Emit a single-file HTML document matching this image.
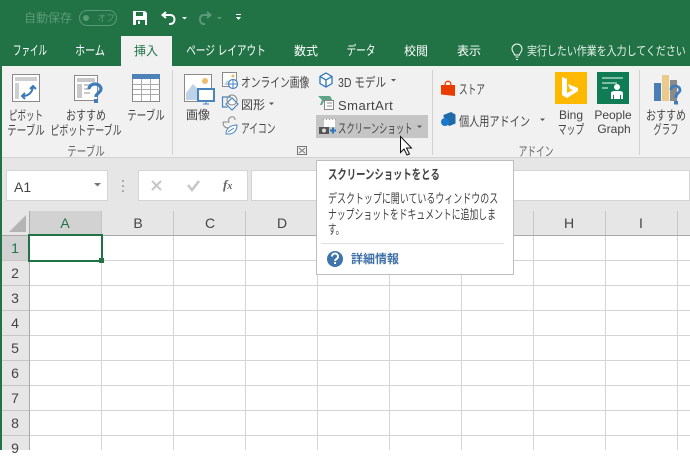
<!DOCTYPE html>
<html lang="ja"><head><meta charset="utf-8"><style>
*{box-sizing:border-box}
html,body{margin:0;padding:0}
body{width:690px;height:450px;overflow:hidden;position:relative;background:#fff;font-family:"Liberation Sans","Noto Sans CJK JP",sans-serif;color:#444}
.a{position:absolute;white-space:nowrap}
.c{text-align:center;transform:translateX(-50%) scaleX(var(--k,1))}
.x{transform-origin:0 50%;transform:scaleX(var(--k,1))}
.t{font-size:12px;line-height:14px;color:#fff;top:44px}
.r{font-size:12px;line-height:15px;color:#444}
.q{font-size:13px;line-height:14px;color:#444}
.b{font-size:13px}
.s{position:absolute;left:0;top:0}
.h{position:absolute;font-size:14px;line-height:16px;color:#444;top:215px;transform:translateX(-50%)}
.n{position:absolute;font-size:14px;line-height:16px;color:#444;left:15px;transform:translateX(-50%)}
</style></head><body>
<div class="a" style="left:0;top:0;width:690px;height:66px;background:#217346"></div>
<div class="a" style="left:0;top:66px;width:690px;height:92px;background:#f1f1f1;border-bottom:1px solid #d2d2d2"></div>
<div class="a" style="left:0;top:66px;width:2px;height:384px;background:#217346"></div>
<div class="a" style="left:0;top:158px;width:690px;height:53px;background:#e6e6e6;margin-left:2px"></div>

<div class="a" style="left:24px;top:11px;font-size:12px;line-height:15px;color:#5b9a77">自動保存</div>
<div class="a" style="left:79px;top:10px;width:38px;height:16px;border:1px solid #5b9a77;border-radius:8px"></div>
<div class="a" style="left:83px;top:15px;width:6px;height:6px;border-radius:3px;background:#5b9a77"></div>
<div class="a" style="left:97px;top:13px;font-size:9px;line-height:11px;color:#5b9a77">オフ</div>
<svg class="s" width="260" height="34"><path d="M133 11h12l2 2v12h-14z" fill="#fff"/><path d="M136 12h7v4h-7zM136 20h9v5h-9z" fill="#217346"/><path d="M138 21h2v3h-2z" fill="#fff"/>
<path d="M166 12l-3.500 3 3.500 3M163 15h7c3 0 4.500 2 4.500 4.500s-1.500 4.500-4.500 4.500h-1" fill="none" stroke="#fff" stroke-width="2"/><path d="M182 17h5l-2.500 2.500z" fill="#fff"/>
<path d="M207 12l3.500 3-3.500 3M210 15h-6c-3 0-4 2-4 4.500s1.500 4.500 4 4.500h1" fill="none" stroke="#5b9a77" stroke-width="2"/><path d="M217 17h5l-2.500 2.500z" fill="#5b9a77"/>
<path d="M236 14h5v1h-5zM236 17h5l-2.500 3z" fill="#fff"/></svg>

<div class="a" style="left:121px;top:36px;width:51px;height:30px;background:#f1f1f1"></div>
<div class="a t b c" style="left:30px;--k:.655">ファイル</div>
<div class="a t b c" style="left:90px;--k:.77">ホーム</div>
<div class="a t c" style="left:146px;color:#217346">挿入</div>
<div class="a t b c" style="left:226px;--k:.74">ページ レイアウト</div>
<div class="a t c" style="left:306px">数式</div>
<div class="a t b c" style="left:361px;--k:.74">データ</div>
<div class="a t c" style="left:416px">校閲</div>
<div class="a t c" style="left:469px">表示</div>
<div class="a t x" style="left:527px;color:#e6f0ea;--k:.83">実行したい作業を入力してください</div>
<svg class="s" width="690" height="66"><path d="M515.500 57h3M516 59.500h2M514.500 55c0-2-2.500-3-2.500-6a5 5 0 0 1 10 0c0 3-2.500 4-2.500 6z" fill="none" stroke="#fff"/></svg>

<!-- ribbon separators -->
<div class="a" style="left:172px;top:70px;width:1px;height:85px;background:#d2d2d2"></div>
<div class="a" style="left:432px;top:70px;width:1px;height:85px;background:#d2d2d2"></div>
<div class="a" style="left:639px;top:70px;width:1px;height:85px;background:#d2d2d2"></div>

<div class="a" style="left:316px;top:115px;width:112px;height:23px;background:#c5c5c5"></div>

<svg class="s" width="690" height="160">
<!-- pivot -->
<rect x="12.500" y="74.500" width="27" height="27" fill="#fff" stroke="#8a8a8a"/><path d="M15 77h22v4h-22zM15 83h4v16h-4z" fill="#cfcfcf"/><path d="M23 96c5 0 9-3 10-9M30 89l3-3 3 3M25 93l-3 3 3 3" fill="none" stroke="#3d7ab8" stroke-width="2"/>
<!-- recommended pivot -->
<rect x="74.500" y="75.500" width="23" height="25" fill="#fff" stroke="#8a8a8a"/><path d="M77 78h18v4h-18zM77 84h5v14h-5zM84 84h9v2h-9zM84 88h6v2h-6zM84 92h6v2h-6z" fill="#c8c8c8"/>
<path d="M89 89c0-3 3-5 6-5s6 2 6 5-4 4-5 7v1" fill="none" stroke="#3f7cbb" stroke-width="3.200"/><rect x="94" y="99" width="4" height="4" fill="#3f7cbb"/>
<!-- table -->
<rect x="132.500" y="74.500" width="27" height="27" fill="#fff" stroke="#8a8a8a"/><rect x="132" y="74" width="28" height="5" fill="#4d82b8"/><path d="M133 84.500h27M133 89.500h27M133 94.500h27M141.500 79v22M150.500 79v22" stroke="#aaa" fill="none"/>
<!-- image -->
<rect x="184.500" y="74.500" width="27" height="27" fill="#fff" stroke="#8a8a8a"/><circle cx="205" cy="81" r="3" fill="#eebc6a"/><path d="M186 100v-7l7-9 8 8v8z" fill="#bfd3e8"/><rect x="198" y="89" width="16" height="12" fill="#fff" stroke="#4a84bd" stroke-width="2"/><path d="M203 104h6M206 101v3" stroke="#4a84bd"/>
<!-- online image -->
<rect x="222.500" y="72.500" width="14" height="14" fill="#fff" stroke="#8a8a8a"/><circle cx="233" cy="76" r="1.500" fill="#eebc6a"/><path d="M224 85l3-5 3 3v2z" fill="#bfd3e8"/><circle cx="233" cy="84" r="4.500" fill="#fff" stroke="#4a84bd" stroke-width="1.200"/><path d="M228.500 84h9M233 79.500v9" stroke="#4a84bd"/>
<!-- shapes -->
<path d="M231 97h-8.500v10h5" fill="none" stroke="#4a84bd" stroke-width="1.200"/><path d="M226 104l6-6 6 6-6 6z" fill="#fff" stroke="#4a84bd" stroke-width="1.200"/><circle cx="232" cy="100" r="5" fill="none" stroke="#8a8a8a" stroke-width="1"/>
<!-- icons -->
<path d="M223 122h6c-1-3 0-4 2-5 3-1 4 1 4 3M223 122c0 4 2 6 5 6" fill="none" stroke="#888"/><path d="M226 134c0-6 5-9 11-9 0 6-4 9-8 9z" fill="#fff" stroke="#4a84bd"/><path d="M228 132l6-4" stroke="#4a84bd"/>
<!-- 3D -->
<path d="M326 73l6 3.500v7l-6 3.500-6-3.500v-7zM320 76.500l6 3.500 6-3.500M326 80v7" fill="#fff" stroke="#2a77b9" stroke-width="1.300"/>
<!-- SmartArt -->
<path d="M318 96h12l3 5h-9l-2 4h-2l2-5z" fill="#5ea488"/><rect x="324.500" y="100.500" width="9" height="9" fill="#fff" stroke="#888"/><path d="M327 103h5M327 106h5" stroke="#888"/>
<!-- screenshot -->
<rect x="324" y="119" width="11" height="8" fill="#fff"/><path d="M323 119.500h13" stroke="#999" stroke-dasharray="1 2"/><rect x="319" y="127" width="10" height="7" fill="#555"/><circle cx="324" cy="130.500" r="2" fill="#ddd"/><path d="M330 130.500h6M333 127.500v6" stroke="#2a77b9" stroke-width="2"/>
<!-- store -->
<path d="M441 85h14v11l-14-1.500z" fill="#eb3c00"/><path d="M445 85c0-5 6-5 6 0" fill="none" stroke="#eb3c00" stroke-width="1.300"/>
<!-- personal add-in -->
<path d="M451 112l4.500 2.500v9l-6 2.500-3-2v-4l-3-3v-2z" fill="#1f6aa8"/><circle cx="445" cy="122" r="4" fill="#1a78d0"/>
<!-- Bing -->
<rect x="555" y="72" width="32" height="32" fill="#ffb900"/><path d="M562 77l5 2v14l6-3-3-1-2-5 10 4v3l-11 7-5-3z" fill="#fff"/>
<!-- People Graph -->
<rect x="597" y="72" width="32" height="32" fill="#107c56"/><path d="M602 77h21v2h-21zM602 82h15v2h-15zM602 87h6v2h-6z" fill="#7fbda6"/><circle cx="617" cy="87" r="3" fill="#fff"/><path d="M611 99v-6c0-2 3-2 6-2s6 0 6 2v6h-2v-4h-1v4h-6v-4h-1v4z" fill="#fff"/>
<!-- recommended chart -->
<rect x="654" y="83" width="7" height="18" fill="#4a7fb5"/><rect x="662" y="75" width="7" height="26" fill="#eccb8a"/><rect x="670" y="80" width="7" height="21" fill="#8a8a8a"/>
<path d="M671 90c0-3 2-4 4-4s5 1 5 4-4 3-4 7v1" fill="none" stroke="#3f7cbb" stroke-width="2.800"/><rect x="674" y="101" width="4" height="3.500" fill="#3f7cbb"/>
<!-- dropdowns -->
<path d="M269 102.500h5l-2.500 2.500zM391 79h5l-2.500 2.500zM417 125.500h5l-2.500 2.500zM540 118.500h5l-2.500 2.500z" fill="#555"/>
<!-- launcher -->
<rect x="297.500" y="146.500" width="9" height="8" fill="none" stroke="#777"/><path d="M299 148l6 5M305 148l-6 5" stroke="#777"/>
</svg>

<div class="a r b c" style="left:26px;top:108px;--k:.655">ピボット</div>
<div class="a r b c" style="left:26px;top:123px;--k:.73">テーブル</div>
<div class="a r b c" style="left:86px;top:108px;--k:.77">おすすめ</div>
<div class="a r b c" style="left:86px;top:123px;--k:.69">ピボットテーブル</div>
<div class="a r b c" style="left:146px;top:108px;--k:.73">テーブル</div>
<div class="a r c" style="left:198px;top:108px">画像</div>
<div class="a r b x" style="left:241px;top:75px;--k:.75">オンライン画像</div>
<div class="a r" style="left:241px;top:98px">図形</div>
<div class="a r b x" style="left:241px;top:121px;--k:.67">アイコン</div>
<div class="a r b x" style="left:338px;top:75px;--k:.81">3D モデル</div>
<div class="a r" style="left:338px;top:98px;font-size:13px;letter-spacing:.5px">SmartArt</div>
<div class="a r b x" style="left:338px;top:121px;--k:.64">スクリーンショット</div>
<div class="a r b x" style="left:459px;top:82px;--k:.665">ストア</div>
<div class="a r b x" style="left:459px;top:114px;--k:.78">個人用アドイン</div>
<div class="a r c" style="left:571px;top:108px">Bing</div>
<div class="a r b c" style="left:571px;top:122px;--k:.665">マップ</div>
<div class="a r c" style="left:613px;top:108px">People</div>
<div class="a r c" style="left:614px;top:122px">Graph</div>
<div class="a r b c" style="left:666px;top:108px;--k:.77">おすすめ</div>
<div class="a r b c" style="left:666px;top:122px;--k:.645">グラフ</div>
<div class="a r b c" style="left:86px;top:144px;color:#666;--k:.73">テーブル</div>
<div class="a r b c" style="left:536px;top:144px;color:#666;--k:.67">アドイン</div>

<!-- formula bar -->
<div class="a" style="left:6px;top:170px;width:102px;height:31px;background:#fff;border:1px solid #d4d4d4"></div>
<div class="a" style="left:14px;top:179px;font-size:14px;line-height:16px;color:#444">A1</div>
<div class="a" style="left:138px;top:170px;width:110px;height:31px;background:#fff;border:1px solid #d4d4d4"></div>
<div class="a" style="left:251px;top:170px;width:439px;height:31px;background:#fff;border:1px solid #d4d4d4"></div>
<div class="a" style="left:223px;top:177px;font:italic bold 13px 'Liberation Serif',serif;color:#666">f<span style="font-size:10px">x</span></div>
<svg class="s" width="690" height="211"><path d="M94 183h7l-3.500 3.500z" fill="#777"/><path d="M123 180v2M123 185v2M123 190v2" stroke="#aaa" stroke-width="2"/><path d="M152 181l9 9M161 181l-9 9" stroke="#c6c6c6" stroke-width="2"/><path d="M188 185l4 5 7-9" fill="none" stroke="#c6c6c6" stroke-width="2.500"/></svg>

<!-- grid -->
<svg class="s" width="690" height="450">
<rect x="2" y="211" width="688" height="25" fill="#e6e6e6"/>
<rect x="2" y="236" width="27" height="214" fill="#e6e6e6"/>
<rect x="29" y="211" width="72" height="24" fill="#d2d2d2"/>
<rect x="2" y="236" width="27" height="25" fill="#d2d2d2"/>
<path d="M26 215v17h-17z" fill="#b4b4b4"/>
<g stroke="#d4d4d4"><path d="M29 260.500h661M29 285.500h661M29 310.500h661M29 335.500h661M29 360.500h661M29 385.500h661M29 410.500h661M29 435.500h661M101.500 236v214M173.500 236v214M245.500 236v214M317.500 236v214M389.500 236v214M461.500 236v214M533.500 236v214M605.500 236v214M677.500 236v214"/></g>
<g stroke="#c6c6c6"><path d="M2 260.500h27M2 285.500h27M2 310.500h27M2 335.500h27M2 360.500h27M2 385.500h27M2 410.500h27M2 435.500h27"/><path d="M101.500 211v24M173.500 211v24M245.500 211v24M317.500 211v24M389.500 211v24M461.500 211v24M533.500 211v24M605.500 211v24M677.500 211v24"/></g>
<path d="M2 235.500h688M29.500 211v239" stroke="#a8a8a8"/>
<rect x="29" y="235" width="73" height="26" fill="none" stroke="#217346" stroke-width="2"/>
<rect x="99" y="258" width="5" height="5" fill="#217346"/>
</svg>
<div class="h" style="left:65px;color:#217346">A</div><div class="h" style="left:138px">B</div><div class="h" style="left:210px">C</div><div class="h" style="left:282px">D</div><div class="h" style="left:569px">H</div><div class="h" style="left:641px">I</div>
<div class="n" style="top:240px;color:#217346">1</div><div class="n" style="top:265px">2</div><div class="n" style="top:290px">3</div><div class="n" style="top:315px">4</div><div class="n" style="top:340px">5</div><div class="n" style="top:365px">6</div><div class="n" style="top:390px">7</div><div class="n" style="top:415px">8</div><div class="n" style="top:440px">9</div>

<!-- tooltip -->
<div class="a" style="left:316px;top:160px;width:198px;height:115px;background:#fff;border:1px solid #bebebe"></div>
<div class="a q x" style="left:328px;top:168px;font-weight:bold;--k:.72">スクリーンショットをとる</div>
<div class="a q x" style="left:328px;top:192px;--k:.69">デスクトップに開いているウィンドウのス</div>
<div class="a q x" style="left:328px;top:208px;--k:.68">ナップショットをドキュメントに追加しま</div>
<div class="a q x" style="left:328px;top:223px;--k:.65">す。</div>
<div class="a" style="left:321px;top:243px;width:183px;height:1px;background:#e0e0e0"></div>
<div class="a" style="left:351px;top:252px;font-size:12px;line-height:15px;font-weight:bold;color:#3d6fa8">詳細情報</div>
<svg class="s" width="690" height="450"><circle cx="335" cy="259" r="8" fill="#3f74ad"/><path d="M332 256.500c0-4 6-4 6 0 0 2.500-3 2.500-3 4.500" fill="none" stroke="#fff" stroke-width="2"/><rect x="334" y="262" width="2" height="2" fill="#fff"/>
<path d="M400.500 136.500v16l3.500-3.500 3 6 2.500-1-3-6h5z" fill="#fff" stroke="#111"/></svg>
</body></html>
